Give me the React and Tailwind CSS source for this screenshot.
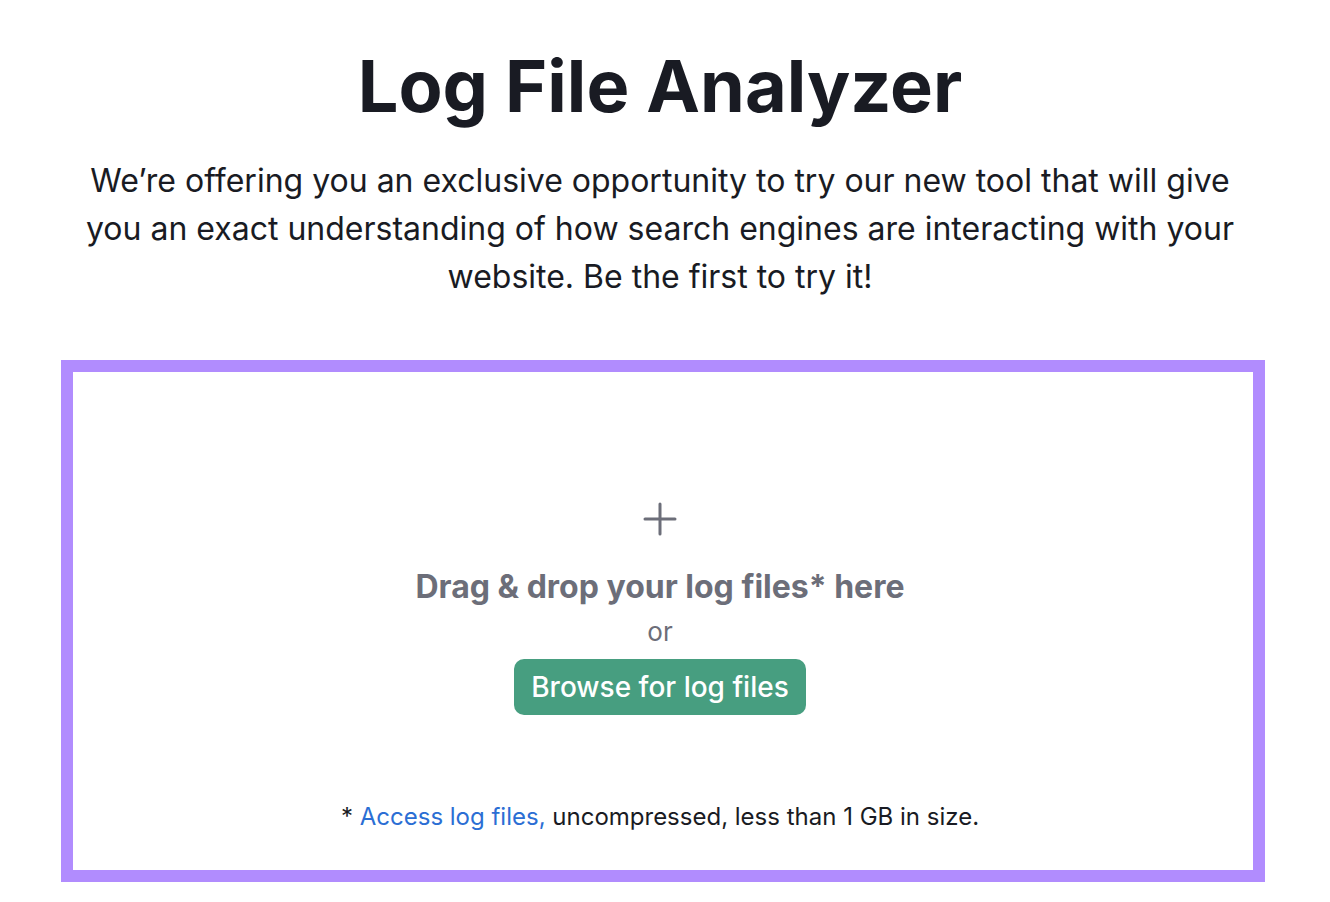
import React from "react";

export default function App() {
  return (
    <div className="min-h-[902px] bg-white pt-[50px] font-['Inter',sans-serif]">
      {/* header */}
      <div className="w-[1320px] flex flex-col items-center text-center">
        <h1 className="text-[72px] leading-[72px] font-bold text-[#191b23]">
          Log File Analyzer
        </h1>
        <p className="mt-[35px] text-[32px] leading-[48px] text-[#191b23] w-[1160px]">
          We’re offering you an exclusive opportunity to try our new tool that will give you an exact understanding of how search engines are interacting with your website. Be the first to try it!
        </p>
      </div>

      {/* drop zone */}
      <div className="mt-[59px] ml-[61px] w-[1204px] h-[522px] border-[12px] border-[#b18cfe] pr-[6px] flex flex-col items-center">
        <svg className="mt-[130px] w-[34px] h-[34px] text-[#6c6e79]" viewBox="0 0 34 34" fill="none">
          <path d="M17 2v30M2 17h30" stroke="currentColor" strokeWidth="3" strokeLinecap="round" />
        </svg>
        <div className="mt-[31px] text-[32px] leading-[40px] font-bold text-[#6c6e79]">
          Drag &amp; drop your log files* here
        </div>
        <div className="mt-[9px] text-[26px] leading-[32px] text-[#6c6e79]">or</div>
        <button className="mt-[11px] w-[292px] h-[56px] rounded-[10px] bg-[#479e80] text-white text-[28px] font-medium">
          Browse for log files
        </button>
        <div className="mt-[86px] text-[24px] leading-[32px] text-[#191b23]">
          * <span className="text-[#2b6ed4]">Access log files,</span> uncompressed, less than 1 GB in size.
        </div>
      </div>
    </div>
  );
}
